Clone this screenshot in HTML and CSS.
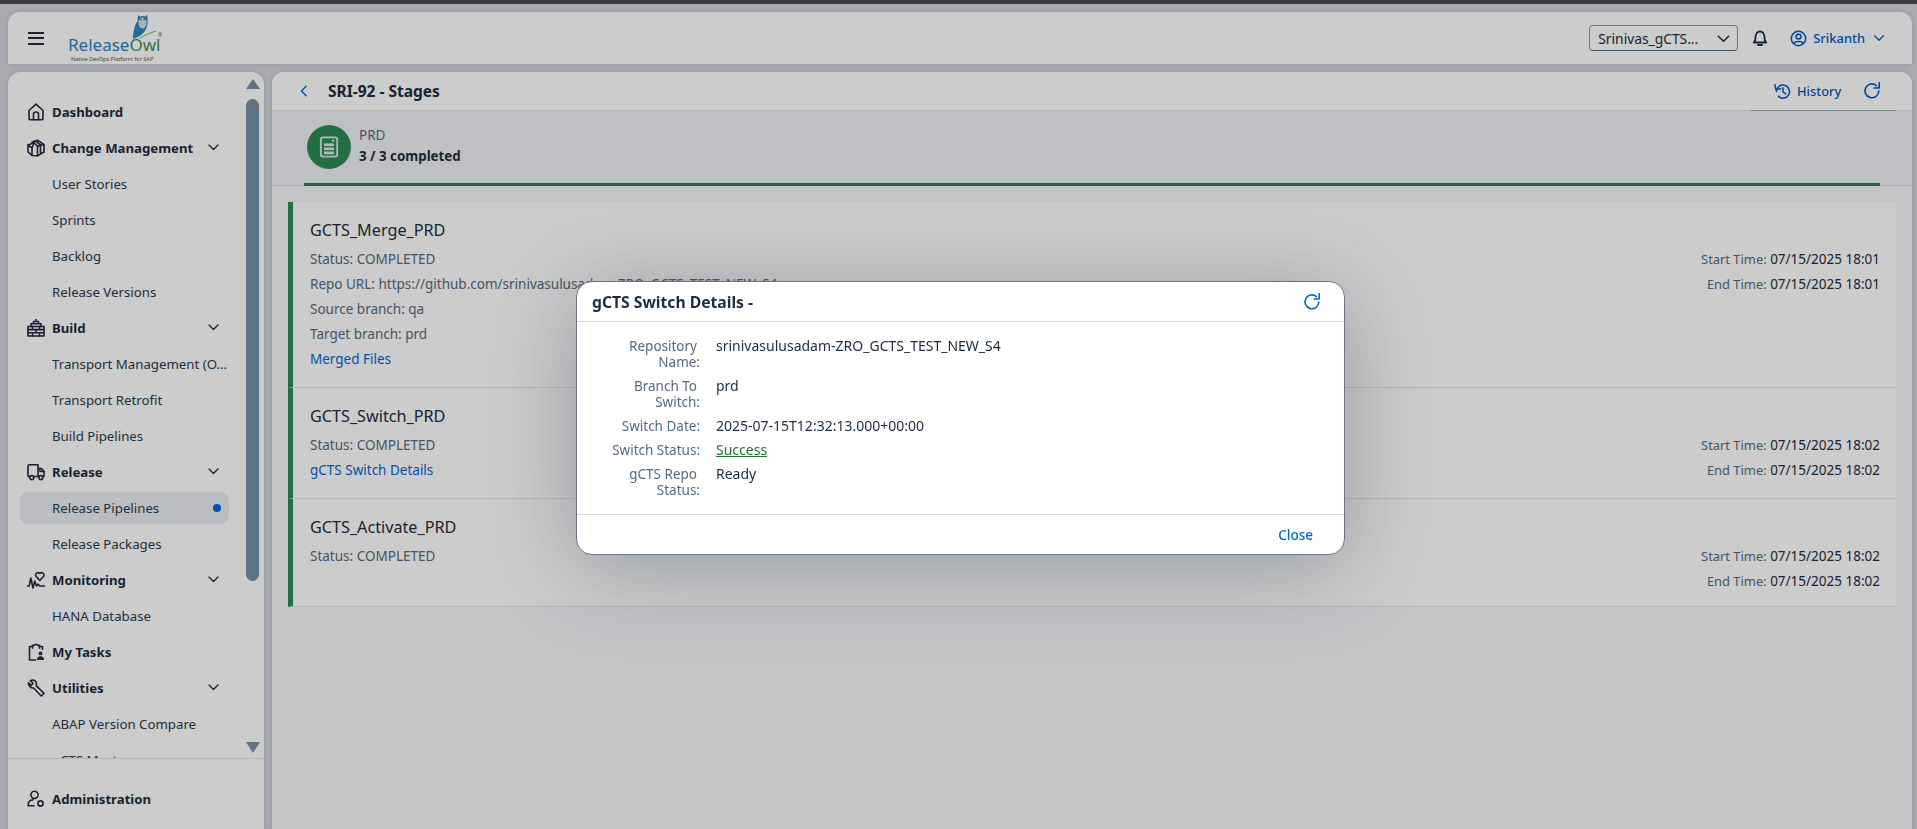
FILE: index.html
```html
<!DOCTYPE html>
<html>
  <head>
    <meta name="viewport" content="width=device-width,initial-scale=1.0">
    <title>ReleaseOwl - Stages</title>
    <link rel="stylesheet" href="styles.css">
  </head>
  <body>
    <div class="top-strip"></div>
    <div class="shell">
      <header class="app-header">
        <button class="menu-btn" aria-label="Menu"><span></span><span></span><span></span></button>
        <div class="logo">
          <svg class="logo-owl" viewBox="0 0 26 26" width="26" height="26">
            <path d="M7 1 L9 2.5 C10.5 1.8 13 1.8 14.5 2.5 L16 0.5 C17 6 17 11 15 15 C12.5 20 8 23 2 25 C2 18 3.5 11 6.5 7 Z" fill="#2f88b8"/>
            <ellipse cx="11.5" cy="9" rx="4" ry="5.5" fill="#cfe3ee"/>
            <circle cx="9.8" cy="5.5" r="1" fill="#b5573c"/>
            <circle cx="13.2" cy="5.5" r="1" fill="#b5573c"/>
            <path d="M9 24 C14 21 19 19 25 17" stroke="#7fb24a" stroke-width="1" fill="none"/>
          </svg>
          <div class="logo-name"><span class="logo-blue">Release</span><span class="logo-green">Owl</span></div>
          <div class="logo-tag">Native DevOps Platform for SAP</div>
          <span class="logo-reg">®</span>
        </div>
        <div class="header-right">
          <div class="project-select">
            <span>Srinivas_gCTS...</span>
            <svg viewBox="0 0 16 16" width="15" height="15"><path d="M2.5 5.5 L8 11 L13.5 5.5" class="ic" stroke-width="1.8"/></svg>
          </div>
          <svg class="bell" viewBox="0 0 16 16" width="18" height="18"><path d="M2.5 12 C3.8 10.8 4 9.5 4 7.5 C4 4.4 5.8 2.2 8 2.2 C10.2 2.2 12 4.4 12 7.5 C12 9.5 12.2 10.8 13.5 12 Z" class="ic" stroke-width="1.7"/><path d="M6.3 14.2 H9.7" class="ic" stroke-width="2"/></svg>
          <div class="user">
            <svg viewBox="0 0 18 18" width="17" height="17"><circle cx="9" cy="9" r="7.6" class="ic" stroke-width="1.7"/><circle cx="9" cy="7" r="2.6" class="ic" stroke-width="1.6"/><path d="M4.5 14 C5.5 11.6 12.5 11.6 13.5 14" class="ic" stroke-width="1.6"/></svg>
            <span>Srikanth</span>
            <svg viewBox="0 0 16 16" width="12" height="12"><path d="M2 5 L8 11 L14 5" class="ic" stroke-width="1.8"/></svg>
          </div>
        </div>
      </header>

      <div class="workspace">
        <aside class="sidebar">
          <div class="side-scroll">
            <nav class="side-nav">
              <div class="nav-group">
                <svg viewBox="0 0 18 18"><path d="M2 15 V7.5 L9 1.2 L16 7.5 V15 Q16 16.8 14 16.8 H4 Q2 16.8 2 15 Z" class="ic"/><path d="M6.5 16.8 V11 Q6.5 9 9 9 Q11.5 9 11.5 11 V16.8" class="ic"/></svg>
                <span>Dashboard</span>
              </div>
              <div class="nav-group">
                <svg viewBox="0 0 18 18"><path d="M1 6 L7 3.8 L10.5 7 V16.8 L5 16.5 L1 12.8 Z" class="ic"/><path d="M7 3.8 L5 9 V16.5 M5 9 L1 6 M5 3 L10.5 1.2 L17 5.5 V13 L10.5 16.8 M10.5 7 L17 5.5 M8.5 2 L13.5 5.8 V15" class="ic" stroke-width="1.4"/></svg>
                <span>Change Management</span>
                <svg class="chev" viewBox="0 0 16 16"><path d="M2.5 5 L8 10.5 L13.5 5" class="ic"/></svg>
              </div>
              <div class="nav-item">User Stories</div>
              <div class="nav-item">Sprints</div>
              <div class="nav-item">Backlog</div>
              <div class="nav-item">Release Versions</div>
              <div class="nav-group">
                <svg viewBox="0 0 18 18"><path d="M1 7.5 H17 V17 H1 Z M4 7.5 V4.8 H14 V7.5 M6.5 4.8 V2.5 H11.5 V4.8 M9 2.5 V0.3" class="ic" stroke-width="1.5"/><path d="M1 10.6 H17 M1 13.8 H17 M5.5 7.5 V10.6 M12.5 7.5 V10.6 M9 10.6 V13.8 M5.5 13.8 V17 M12.5 13.8 V17" class="ic" stroke-width="1.2"/></svg>
                <span>Build</span>
                <svg class="chev" viewBox="0 0 16 16"><path d="M2.5 5 L8 10.5 L13.5 5" class="ic"/></svg>
              </div>
              <div class="nav-item">Transport Management (O...</div>
              <div class="nav-item">Transport Retrofit</div>
              <div class="nav-item">Build Pipelines</div>
              <div class="nav-group">
                <svg viewBox="0 0 18 18"><path d="M2.6 13.5 H1 V3 Q1 1.8 2.2 1.8 H11 V13.5 H7 M11 5.5 H14.5 L17 8.5 V13.5 H15.8 M11 13.5 H12" class="ic"/><path d="M13 5.5 V8.5 H17" class="ic" stroke-width="1.2"/><circle cx="4.8" cy="14.6" r="2" class="ic"/><circle cx="13.9" cy="14.6" r="2" class="ic"/></svg>
                <span>Release</span>
                <svg class="chev" viewBox="0 0 16 16"><path d="M2.5 5 L8 10.5 L13.5 5" class="ic"/></svg>
              </div>
              <div class="nav-item nav-active">Release Pipelines<span class="nav-dot"></span></div>
              <div class="nav-item">Release Packages</div>
              <div class="nav-group">
                <svg viewBox="0 0 18 18"><path d="M0.5 15 H2.2 L3.8 7 L6 17 L7.8 10 L9.5 15 L11 13.2 L12.8 15 H17.5" class="ic"/><path d="M12.8 9.5 L9.2 5.5 C7.6 3.2 10.2 0.3 12.8 2.4 C15.4 0.3 18 3.2 16.4 5.5 Z" class="ic"/></svg>
                <span>Monitoring</span>
                <svg class="chev" viewBox="0 0 16 16"><path d="M2.5 5 L8 10.5 L13.5 5" class="ic"/></svg>
              </div>
              <div class="nav-item">HANA Database</div>
              <div class="nav-group">
                <svg viewBox="0 0 18 18"><path d="M5.5 3.5 H2.5 V17 H8.5 M12.5 3.5 H15.5 V6.5 M5.5 5.2 V2.4 H7.2 Q9 0 10.8 2.4 H12.5 V5.2" class="ic"/><circle cx="13.5" cy="10.4" r="1.9" fill="currentColor"/><path d="M10 17 Q10 13.3 13.5 13.3 Q17 13.3 17 17 Z" fill="currentColor"/></svg>
                <span>My Tasks</span>
              </div>
              <div class="nav-group">
                <svg viewBox="0 0 18 18"><path d="M7.5 1.4 A4.6 4.6 0 0 0 3.4 1.6 L6 4.2 L4.2 6.4 L1.4 3.8 A4.8 4.8 0 0 0 6.6 9 L14.2 17 L17 14.4 L9.2 6.6 A4.6 4.6 0 0 0 7.5 1.4 Z" class="ic" stroke-width="1.6"/></svg>
                <span>Utilities</span>
                <svg class="chev" viewBox="0 0 16 16"><path d="M2.5 5 L8 10.5 L13.5 5" class="ic"/></svg>
              </div>
              <div class="nav-item">ABAP Version Compare</div>
              <div class="nav-item">gCTS Master</div>
            </nav>
            <div class="scrollbar">
              <div class="arrow-up"></div>
              <div class="thumb"></div>
              <div class="arrow-down"></div>
            </div>
          </div>
          <div class="side-bottom">
            <div class="nav-group">
              <svg viewBox="0 0 18 18"><circle cx="7.5" cy="4.8" r="3.6" class="ic"/><path d="M1.2 15.5 Q1 10.2 6.2 9.8 M1.2 15.8 H7" class="ic"/><circle cx="13.5" cy="13.5" r="2.6" class="ic" stroke-width="2.6"/></svg>
              <span>Administration</span>
            </div>
          </div>
        </aside>

        <main class="content">
          <div class="title-bar">
            <svg class="back" viewBox="0 0 16 16" width="14" height="14"><path d="M10.5 2.5 L5 8 L10.5 13.5" class="ic" stroke-width="1.9"/></svg>
            <h1>SRI-92 - Stages</h1>
            <div class="title-actions">
              <svg viewBox="0 0 18 18" width="17" height="17"><path d="M2.6 9 A6.9 6.9 0 1 1 4.8 14.2" class="ic" stroke-width="1.9"/><path d="M1 1.8 L2 7 L7 6" class="ic" stroke-width="1.9"/><path d="M9.5 5 V9.5 L12.5 11.5" class="ic" stroke-width="1.8"/></svg>
              <span class="history">History</span>
              <svg class="title-refresh" viewBox="0 0 18 18" width="18" height="18"><path d="M15.8 9 A6.9 6.9 0 1 1 13.4 3.6" class="ic" stroke-width="1.9"/><path d="M16.2 0.8 V6 H11" class="ic" stroke-width="1.9"/></svg>
            </div>
          </div>

          <div class="stage-area">
            <div class="stage-tab">
              <div class="stage-icon">
                <svg viewBox="0 0 22 24" width="20" height="22">
                  <rect x="2" y="1.5" width="18" height="21" rx="2.5" fill="none" stroke="#dfe8e2" stroke-width="2"/>
                  <rect x="5.5" y="8" width="11" height="3" fill="#dfe8e2"/>
                  <rect x="5.5" y="12.5" width="11" height="3" fill="#dfe8e2"/>
                  <rect x="5.5" y="17" width="11" height="3" fill="#dfe8e2"/>
                  <circle cx="15.5" cy="5" r="1.3" fill="#dfe8e2"/>
                </svg>
              </div>
              <div>
                <div class="stage-name">PRD</div>
                <div class="stage-count">3 / 3 completed</div>
              </div>
            </div>
          </div>

          <section class="task-list">
            <article class="task">
              <h2>GCTS_Merge_PRD</h2>
              <div class="task-body">
                <div class="task-info">
                  <div class="muted">Status: COMPLETED</div>
                  <div class="muted">Repo URL: https://github.com/srinivasulusadam-ZRO_GCTS_TEST_NEW_S4</div>
                  <div class="muted">Source branch: qa</div>
                  <div class="muted">Target branch: prd</div>
                  <a class="link">Merged Files</a>
                </div>
                <div class="task-times">
                  <div><span class="time-label">Start Time:</span> 07/15/2025 18:01</div>
                  <div><span class="time-label">End Time:</span> 07/15/2025 18:01</div>
                </div>
              </div>
            </article>
            <article class="task">
              <h2>GCTS_Switch_PRD</h2>
              <div class="task-body">
                <div class="task-info">
                  <div class="muted">Status: COMPLETED</div>
                  <a class="link">gCTS Switch Details</a>
                </div>
                <div class="task-times">
                  <div><span class="time-label">Start Time:</span> 07/15/2025 18:02</div>
                  <div><span class="time-label">End Time:</span> 07/15/2025 18:02</div>
                </div>
              </div>
            </article>
            <article class="task">
              <h2>GCTS_Activate_PRD</h2>
              <div class="task-body">
                <div class="task-info">
                  <div class="muted">Status: COMPLETED</div>
                </div>
                <div class="task-times">
                  <div><span class="time-label">Start Time:</span> 07/15/2025 18:02</div>
                  <div><span class="time-label">End Time:</span> 07/15/2025 18:02</div>
                </div>
              </div>
            </article>
          </section>
        </main>
      </div>
    </div>

    <div class="block-layer"></div>
    <div class="dialog">
      <div class="dialog-head">
        <span>gCTS Switch Details -</span>
        <svg viewBox="0 0 18 18" width="18" height="18"><path d="M15.8 9 A6.9 6.9 0 1 1 13.4 3.6" class="ic" stroke-width="1.9"/><path d="M16.2 0.8 V6 H11" class="ic" stroke-width="1.9"/></svg>
      </div>
      <div class="dialog-body">
        <div class="field-label"><span class="wrapped">Repository</span><br>Name:</div>
        <div class="field-value">srinivasulusadam-ZRO_GCTS_TEST_NEW_S4</div>
        <div class="field-label"><span class="wrapped">Branch To</span><br>Switch:</div>
        <div class="field-value">prd</div>
        <div class="field-label">Switch Date:</div>
        <div class="field-value">2025-07-15T12:32:13.000+00:00</div>
        <div class="field-label">Switch Status:</div>
        <div class="field-value"><a class="success">Success</a></div>
        <div class="field-label"><span class="wrapped">gCTS Repo</span><br>Status:</div>
        <div class="field-value">Ready</div>
      </div>
      <div class="dialog-foot"><a class="close-link">Close</a></div>
    </div>
  </body>
</html>
```

FILE: styles.css
```css
* { box-sizing: border-box; }
html, body { height: 100%; }
body {
  margin: 0;
  overflow: hidden;
  background: #d3d8dc;
  color: #1d2d3e;
  font-family: "Noto Sans", "Liberation Sans", sans-serif;
  font-size: 13.5px;
}
.ic { fill: none; stroke: currentColor; stroke-width: 1.6; stroke-linecap: round; stroke-linejoin: round; }

.top-strip { height: 4px; background: #4a4a4a; }
.shell { height: 825px; padding: 8px 5px 0 8px; display: flex; flex-direction: column; gap: 8px; }

.app-header {
  height: 52px;
  flex: none;
  display: flex;
  align-items: center;
  background: #fff;
  border-radius: 12px 12px 0 0;
  padding: 0 0 0 20px;
  box-shadow: 0 0 4px rgba(85, 107, 130, .3);
}
.menu-btn { width: 16px; border: 0; padding: 0; background: none; display: flex; flex-direction: column; gap: 3.5px; margin-right: 24px; }
.menu-btn span { height: 2px; background: #1d2d3e; }
.logo { position: relative; width: 90px; height: 52px; color: #556b82; }
.logo-owl { position: absolute; left: 63px; top: 2px; }
.logo-name { padding-top: 23px; font-size: 17px; line-height: 20px; white-space: nowrap; }
.logo-blue { color: #2a82bd; }
.logo-green { color: #3b8f57; }
.logo-tag { font-size: 5.5px; line-height: 6px; white-space: nowrap; padding-left: 3px; margin-top: 1px; color: #555; }
.logo-reg { position: absolute; left: 90px; top: 20px; font-size: 5px; line-height: 6px; color: #555; }
.header-right { margin-left: auto; display: flex; align-items: center; color: #1d2d3e; }
.project-select {
  width: 149px;
  height: 26px;
  display: flex;
  align-items: center;
  justify-content: space-between;
  padding: 0 6px 0 8px;
  background: #fff;
  border: 1px solid #8c99a6;
  border-bottom-color: #556b82;
  border-radius: 4px;
  font-size: 13.8px;
}
.bell { margin-left: 13px; }
.user { display: flex; align-items: center; gap: 6px; margin: 0 27px 0 21px; color: #0057c2; font-size: 12.9px; font-weight: 500; }
.user svg:last-child { margin-left: 2px; }

.workspace { flex: 1; min-height: 0; display: flex; gap: 8px; }

.sidebar {
  width: 256px;
  flex: none;
  background: #fff;
  border-radius: 12px 12px 0 0;
  display: flex;
  flex-direction: column;
  box-shadow: 0 0 4px rgba(85, 107, 130, .3);
}
.side-scroll { flex: 1; min-height: 0; display: flex; overflow: hidden; }
.side-nav { flex: 1; min-width: 0; padding: 22px 8px 0 12px; overflow: hidden; }
.nav-group, .nav-item { height: 36px; display: flex; align-items: center; white-space: nowrap; }
.nav-group { padding-left: 7px; font-size: 13.2px; font-weight: 700; position: relative; }
.nav-group svg:first-child { width: 18px; height: 18px; margin-right: 7px; flex: none; }
.nav-group .chev { width: 13px; height: 13px; position: absolute; left: 187px; top: 11px; }
.nav-item { padding-left: 32px; color: #2c3b4b; font-size: 13.25px; }
.nav-active { background: #e9eef4; border-radius: 8px; height: 32px; margin: 2px 0; position: relative; }
.nav-dot { width: 8px; height: 8px; border-radius: 50%; background: #0064d9; margin-left: auto; margin-right: 8px; }
.scrollbar { width: 27px; flex: none; padding: 7px 5px 0 9px; display: flex; flex-direction: column; align-items: center; }
.arrow-up { width: 0; height: 0; border: 7.5px solid transparent; border-top: 0; border-bottom: 10px solid #7a8fa6; }
.thumb { width: 13px; height: 482px; flex: none; margin: 10px 0 161px; background: #7a8fa6; border-radius: 7px; }
.arrow-down { width: 0; height: 0; border: 7.5px solid transparent; border-bottom: 0; border-top: 11px solid #7a8fa6; }
.side-bottom { height: 71px; flex: none; border-top: 1px solid #e5e5e5; padding: 22px 8px 0 12px; }

.content { flex: 1; min-width: 0; background: #f4f6f8; border-radius: 12px 12px 0 0; box-shadow: 0 0 4px rgba(85, 107, 130, .3); }
.title-bar { height: 39px; display: flex; align-items: center; padding: 0 16px 0 25px; background: #fff; border-radius: 12px 12px 0 0; border-bottom: 1px solid #e5e5e5; position: relative; }
.back { color: #0064d9; }
.title-bar h1 { margin: 0 0 0 17px; font-size: 15.5px; font-weight: 700; }
.title-actions { margin-left: auto; display: flex; align-items: center; color: #0057c2; font-size: 12.8px; font-weight: 500; height: 39px; width: 145px; padding-left: 23px; border-bottom: 1px solid #9aa4ae; align-self: flex-start; }
.history { margin-left: 6px; }
.title-refresh { margin-left: auto; margin-right: 15px; }

.stage-area { height: 75px; padding: 0 32px; background: #eff1f4; box-shadow: inset 0 -1px #e0e2e5; }
.stage-tab { height: 75px; padding: 14px 0 0 3px; display: flex; gap: 8px; border-bottom: 3px solid #2b7c4a; }
.stage-icon { width: 44px; height: 44px; border-radius: 50%; background: #2e8a54; display: flex; align-items: center; justify-content: center; }
.stage-name { color: #556b82; line-height: 18px; margin-top: 1px; }
.stage-count { font-size: 13.3px; font-weight: 700; line-height: 18px; margin-top: 3px; }

.task-list { margin: 16px 16px 0; }
.task { background: #fff; border-left: 5px solid #2e8a54; border-bottom: 1px solid #e5e5e5; padding: 16px 16px 12px 17px; }
.task h2 { margin: 0; font-size: 16.2px; font-weight: 400; line-height: 24px; }
.task-body { display: flex; justify-content: space-between; margin-top: 5px; }
.task-info > *, .task-times > div { display: block; height: 25px; line-height: 25px; }
.task-info .link { margin-bottom: 3px; }
.task-times { text-align: right; }
.muted { color: #556b82; }
.time-label { color: #556b82; font-size: 12.9px; }
.link { color: #0064d9; }

.block-layer { position: fixed; inset: 0; background: rgba(0, 0, 0, .2); }
.dialog {
  position: absolute;
  left: 576px;
  top: 281px;
  width: 769px;
  height: 274px;
  background: #fff;
  border: 1px solid #6a7683;
  border-radius: 16px;
  box-shadow: 0 12px 90px rgba(34, 53, 72, .32);
  display: flex;
  flex-direction: column;
}
.dialog-head { height: 40px; flex: none; display: flex; align-items: center; justify-content: space-between; padding: 0 23px 0 15px; border-bottom: 1px solid #d9d9d9; font-size: 15.7px; font-weight: 700; }
.dialog-head svg { color: #0064d9; }
.dialog-body { flex: 1; display: grid; grid-template-columns: 123px 1fr; column-gap: 16px; row-gap: 8px; align-content: start; padding-top: 16px; line-height: 16px; }
.field-label { text-align: right; color: #556b82; }
.field-value { font-size: 14px; }
.wrapped { margin-right: 3px; }
.success { color: #256f3a; text-decoration: underline; }
.dialog-foot { height: 40px; flex: none; border-top: 1px solid #d9d9d9; display: flex; align-items: center; justify-content: flex-end; padding-right: 31px; }
.close-link { color: #0064d9; font-weight: 500; }
```
